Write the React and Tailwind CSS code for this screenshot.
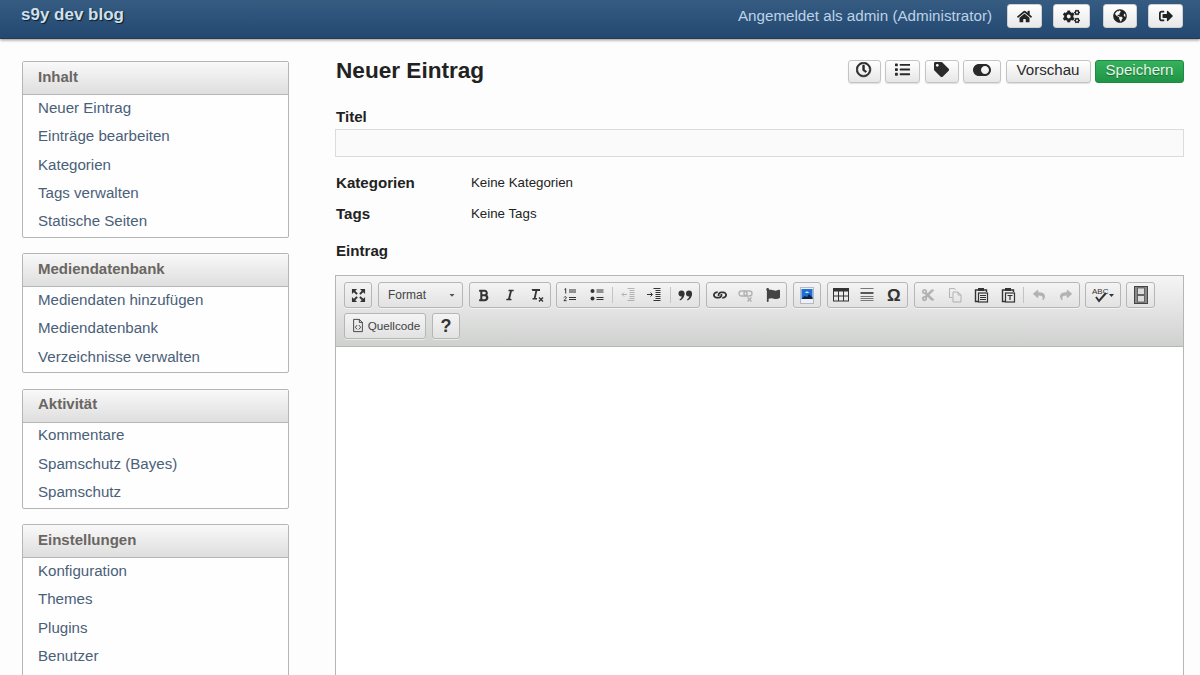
import React from "react";
import { FaHome, FaCogs, FaGlobeAmericas, FaSignOutAlt, FaRegClock, FaList, FaTag, FaToggleOn, FaBold, FaItalic, FaReply, FaShare, FaFlag, FaCut, FaLink, FaCaretDown } from "react-icons/fa";

const font = { fontFamily: '"Liberation Sans", Arial, sans-serif' };

const menus = [
  ["Inhalt", ["Neuer Eintrag", "Einträge bearbeiten", "Kategorien", "Tags verwalten", "Statische Seiten"]],
  ["Mediendatenbank", ["Mediendaten hinzufügen", "Mediendatenbank", "Verzeichnisse verwalten"]],
  ["Aktivität", ["Kommentare", "Spamschutz (Bayes)", "Spamschutz"]],
  ["Einstellungen", ["Konfiguration", "Themes", "Plugins", "Benutzer"]],
];

function HeadBtn({ w, children }) {
  return (
    <button className="h-[24px] flex items-center justify-center rounded-[3px] border border-[#d0d0d0] bg-gradient-to-b from-[#ffffff] to-[#e8e8e8] text-[#222] text-[14px]" style={{ width: w }}>
      {children}
    </button>
  );
}

function ActBtn({ w, children, green }) {
  return (
    <button
      className={green
        ? "h-[23px] pb-[2px] flex items-center justify-center rounded-[3px] border border-[#1f8a41] bg-gradient-to-b from-[#35b25c] to-[#1f9446] text-[#e6f5ea] text-[15.1px] [text-shadow:0_1px_1px_rgba(0,0,0,0.35)]"
        : "h-[23px] pb-[2px] flex items-center justify-center rounded-[3px] border border-[#c4c4c4] bg-gradient-to-b from-[#ffffff] to-[#e6e6e6] text-[#2a2a2a] text-[15.1px] shadow-[0_1px_1px_rgba(0,0,0,0.12)]"}
      style={{ width: w }}
    >
      {children}
    </button>
  );
}

function Group({ w, children }) {
  return (
    <div className="h-[26px] flex items-center justify-center rounded-[3px] border border-[#b6b6b6] bg-gradient-to-b from-[#f4f4f4] to-[#e2e2e2] shadow-[0_1px_0_rgba(255,255,255,0.5)]" style={{ width: w }}>
      {children}
    </div>
  );
}

function Tb({ children, off }) {
  return <span className={"w-[26.5px] h-[24px] flex items-center justify-center text-[#333] " + (off ? "opacity-30" : "")}>{children}</span>;
}

const Sep = () => <span className="w-px h-[16px] mx-[2px] bg-[#c4c4c4] shrink-0" />;

const S = ({ children, w = 16, h = 16 }) => (
  <svg width={w} height={h} viewBox="0 0 16 16" fill="none" stroke="#333" strokeWidth="1.2">{children}</svg>
);

const Maximize = () => (
  <S w={15} h={15}>
    <path d="M1 1h5.5L1 6.5zM15 1H9.5L15 6.5zM1 15h5.5L1 9.5zM15 15H9.5L15 9.5z" fill="#333" stroke="none" />
    <path d="M3.5 3.5l3 3M12.5 3.5l-3 3M3.5 12.5l3-3M12.5 12.5l-3-3" strokeWidth="2" />
  </S>
);
const RemoveFormat = () => (
  <S>
    <path d="M2.5 2h8.5v2H8.2L6.6 11h1.4v1.5H3.5V11h1.3L6.4 4H3.5z" fill="#333" stroke="none" />
    <path d="M10 10.5l4 4M14 10.5l-4 4" strokeWidth="1.4" />
  </S>
);
const Ol = () => (
  <S>
    <path d="M7 3h7M7 5h7M7 10.5h7M7 12.5h7" strokeWidth="1" />
    <path d="M2.5 2.5l1.2-1v5M2 10.5c.5-1.2 2.4-1 2.4.2 0 1-2.4 1.7-2.4 3h2.6" strokeWidth="1" />
  </S>
);
const Ul = () => (
  <S>
    <circle cx="3.5" cy="4" r="2" fill="#333" stroke="none" />
    <circle cx="3.5" cy="11.5" r="2" fill="#333" stroke="none" />
    <path d="M7.5 3h7M7.5 5h7M7.5 10.5h7M7.5 12.5h7" strokeWidth="1" />
  </S>
);
const Outdent = () => (
  <S>
    <path d="M7.5 1.5h7M9.5 3.5h5M9.5 5.5h5M9.5 7.5h5M9.5 9.5h5M9.5 11.5h5M7.5 13.5h7" strokeWidth="1" />
    <path d="M7 7.5H2M4 5.5l-2 2 2 2" strokeWidth="1" />
  </S>
);
const Indent = () => (
  <S>
    <path d="M7.5 1.5h7M9.5 3.5h5M9.5 5.5h5M9.5 7.5h5M9.5 9.5h5M9.5 11.5h5M7.5 13.5h7" strokeWidth="1" />
    <path d="M1 7.5h5M4.5 5.5l2 2-2 2" strokeWidth="1" />
  </S>
);
const Quote = () => (
  <svg width="15" height="11" viewBox="0 0 15 11" fill="#333">
    <circle cx="3.5" cy="3.5" r="3" />
    <path d="M6.5 3.5C6.5 7 4.5 9.5 2 10.5L1.5 9.5C3 8.5 4 7 4 5z" />
    <circle cx="11" cy="3.5" r="3" />
    <path d="M14 3.5C14 7 12 9.5 9.5 10.5L9 9.5C10.5 8.5 11.5 7 11.5 5z" />
  </svg>
);
const Unlink = () => (
  <S>
    <rect x="1" y="4" width="8" height="5" rx="2.5" strokeWidth="1.4" />
    <rect x="6" y="4" width="8" height="5" rx="2.5" strokeWidth="1.4" />
    <path d="M9.5 10.5l4 4M13.5 10.5l-4 4" strokeWidth="1.4" />
  </S>
);
const Img = () => (
  <svg width="14" height="17" viewBox="0 0 14 17">
    <rect x="0.5" y="0.5" width="13" height="16" fill="#eef0f3" stroke="#b4bac4" />
    <rect x="1.5" y="2" width="11" height="10" fill="#1d6fd6" />
    <path d="M1.5 12l3-3 2.5 1 2-3 3.5 3.5V12z" fill="#10233f" />
    <path d="M5 6c1-2 3-2 4 0z" fill="#cfe6ff" />
  </svg>
);
const Table = () => (
  <S>
    <rect x="0.5" y="2" width="15" height="12" strokeWidth="1" />
    <rect x="0" y="1" width="16" height="3.5" fill="#333" stroke="none" />
    <path d="M5.5 4v10M10.5 4v10M.5 9h15" strokeWidth="1" />
  </S>
);
const Hr = () => (
  <S>
    <path d="M1.5 1.5h13" strokeWidth="1" stroke="#777" />
    <path d="M1.5 6h13" strokeWidth="1.6" />
    <path d="M1.5 9.5h13M1.5 11.5h13M1.5 13.5h13" strokeWidth="1" stroke="#777" />
  </S>
);
const Copy = () => (
  <S>
    <path d="M2.5 1.5h5l1 1.5M2.5 1.5v9h3" strokeWidth="1" />
    <path d="M6 5h5l3 3v7H6zM11 5v3h3" strokeWidth="1" />
  </S>
);
const Paste = ({ t }) => (
  <S>
    <path d="M5 3H2.5v11.5H5" strokeWidth="1.4" />
    <path d="M11 3h2.5v2" strokeWidth="1.4" />
    <rect x="5" y="1" width="6" height="3" fill="#333" stroke="none" />
    <rect x="5.5" y="6" width="9" height="9" strokeWidth="1.2" />
    {t ? <path d="M7.5 8.5h5M10 8.5v4.5" strokeWidth="1.2" /> : <path d="M7 8.5h6M7 10.5h6M7 12.5h6" strokeWidth="1" />}
  </S>
);
const Spell = () => (
  <svg width="24" height="18" viewBox="0 0 24 18" fill="none">
    <text x="1" y="8" fontSize="8" fill="#333" style={font}>ABC</text>
    <path d="M5 11l3 4 7-8" stroke="#333" strokeWidth="2" />
    <path d="M18 8h5l-2.5 3z" fill="#333" />
  </svg>
);
const Film = () => (
  <svg width="14" height="18" viewBox="0 0 14 18">
    <rect x="0.5" y="0.5" width="13" height="17" fill="#8a8a8a" stroke="#444" />
    <rect x="3.5" y="2" width="7" height="6.5" fill="#dcdcdc" stroke="#444" strokeWidth="0.7" />
    <rect x="3.5" y="9.5" width="7" height="6.5" fill="#dcdcdc" stroke="#444" strokeWidth="0.7" />
  </svg>
);
const Source = () => (
  <S w={14} h={15}>
    <path d="M3 1h6.5L13 4.5V15H3zM9.5 1v3.5H13" strokeWidth="1" />
    <path d="M7 7.5L5 10l2 2.5M9 7.5l2 2.5-2 2.5" strokeWidth="1" />
  </S>
);

export default function App() {
  return (
    <div className="w-[1200px] h-[675px] overflow-hidden bg-[#fdfdfd] text-[#222]" style={font}>
      <header className="h-[39px] flex items-start justify-between pl-[21px] pr-[17px] bg-gradient-to-b from-[#365c82] to-[#234871] border-b border-[#2a3a4c] shadow-[0_1px_3px_rgba(0,0,0,0.45)]">
        <div className="text-[17px] leading-[30px] font-bold text-[#cfe0ef] [text-shadow:1px_1px_1px_rgba(0,0,0,0.7)]">s9y dev blog</div>
        <div className="flex items-center h-[32px]">
          <span className="text-[15.2px] mt-[1px] text-[#bcd2e6] mr-[15px]">Angemeldet als admin (Administrator)</span>
          <HeadBtn w="35px"><FaHome className="text-[15px]" /></HeadBtn>
          <span className="w-[11px]" />
          <HeadBtn w="37px"><FaCogs className="text-[17px]" /></HeadBtn>
          <span className="w-[13px]" />
          <HeadBtn w="34px"><FaGlobeAmericas /></HeadBtn>
          <span className="w-[11px]" />
          <HeadBtn w="35px"><FaSignOutAlt /></HeadBtn>
        </div>
      </header>

      <div className="flex pl-[22px] pt-[22px]">
        <aside className="w-[267px] flex flex-col gap-[15.2px] shrink-0">
          {menus.map(([title, items], i) => (
            <section key={title} className={"border border-[#b5b5b5] rounded-[2px] bg-[#fefefe] " + (i === 3 ? "pb-[30px]" : "")}>
              <h3 className="h-[33px] pl-[15px] pb-[2px] flex items-center text-[15px] font-bold text-[#6a6662] bg-gradient-to-b from-[#f9f9f9] to-[#dedede] border-b border-[#b5b5b5]">{title}</h3>
              <ul className="mt-[-1px] pb-[1px]">
                {items.map((t) => (
                  <li key={t} className="h-[28.4px] pl-[15px] flex items-center text-[15.1px] text-[#4a6078]">{t}</li>
                ))}
              </ul>
            </section>
          ))}
        </aside>

        <main className="w-[849px] ml-[46px] shrink-0">
          <div className="flex items-center justify-between h-[24px] mt-[-2px]">
            <h1 className="pl-[1px] text-[22.6px] font-bold text-[#222]">Neuer Eintrag</h1>
            <div className="flex items-center gap-[4.5px]">
              <ActBtn w="33px"><FaRegClock stroke="currentColor" strokeWidth={24} /></ActBtn>
              <ActBtn w="35px"><FaList /></ActBtn>
              <ActBtn w="34px"><FaTag /></ActBtn>
              <ActBtn w="38px"><FaToggleOn className="text-[18px]" /></ActBtn>
              <ActBtn w="85px">Vorschau</ActBtn>
              <ActBtn w="89px" green>Speichern</ActBtn>
            </div>
          </div>

          <label className="block pl-[1px] mt-[25px] text-[15.1px] leading-[18px] font-bold">Titel</label>
          <div className="mt-[3px] h-[28px] border border-[#dcdcdc] bg-[#fafafa]" />

          <div className="mt-[17px] pl-[1px] flex items-center h-[18px]">
            <span className="w-[135px] text-[15.1px] font-bold">Kategorien</span>
            <span className="text-[13.3px]">Keine Kategorien</span>
          </div>
          <div className="mt-[13px] pl-[1px] flex items-center h-[18px]">
            <span className="w-[135px] text-[15.1px] font-bold">Tags</span>
            <span className="text-[13.3px]">Keine Tags</span>
          </div>
          <div className="mt-[19px] pl-[1px] h-[18px] flex items-center text-[15.1px] font-bold">Eintrag</div>

          <div className="mt-[15px] h-[500px] border border-[#b6b6b6] bg-white">
            <div className="h-[71px] border-b border-[#b6b6b6] bg-gradient-to-b from-[#f5f5f5] to-[#cfd1cf] pt-[6px] pl-[8px] flex flex-col gap-[5px]">
              <div className="flex items-center">
                <Group w="28px"><Maximize /></Group>
                <span className="w-[6px]" />
                <Group w="85px">
                  <div className="w-full flex items-center justify-between pl-[9px] pr-[6px] text-[12px] text-[#444]">
                    <span>Format</span>
                    <FaCaretDown className="text-[8px] text-[#555]" />
                  </div>
                </Group>
                <span className="w-[6px]" />
                <Group w="82px">
                  <Tb><FaBold className="text-[13px]" /></Tb>
                  <Tb><FaItalic className="text-[12px]" /></Tb>
                  <Tb><RemoveFormat /></Tb>
                </Group>
                <span className="w-[5px]" />
                <Group w="144px">
                  <Tb><Ol /></Tb>
                  <Tb><Ul /></Tb>
                  <Sep />
                  <Tb off><Outdent /></Tb>
                  <Tb><Indent /></Tb>
                  <Sep />
                  <Tb><Quote /></Tb>
                </Group>
                <span className="w-[6px]" />
                <Group w="81px">
                  <Tb><FaLink className="text-[12px] rotate-45" /></Tb>
                  <Tb off><Unlink /></Tb>
                  <Tb><FaFlag className="text-[14px] text-[#444]" /></Tb>
                </Group>
                <span className="w-[6px]" />
                <Group w="28px"><Img /></Group>
                <span className="w-[6px]" />
                <Group w="81px">
                  <Tb><Table /></Tb>
                  <Tb><Hr /></Tb>
                  <Tb><span className="text-[17px] font-bold leading-none">Ω</span></Tb>
                </Group>
                <span className="w-[6px]" />
                <Group w="166px">
                  <Tb off><FaCut className="text-[14px]" /></Tb>
                  <Tb off><Copy /></Tb>
                  <Tb><Paste /></Tb>
                  <Tb><Paste t /></Tb>
                  <Sep />
                  <Tb off><FaReply className="text-[12px]" /></Tb>
                  <Tb off><FaShare className="text-[12px]" /></Tb>
                </Group>
                <span className="w-[5px]" />
                <Group w="36px"><Spell /></Group>
                <span className="w-[5px]" />
                <Group w="29px"><Film /></Group>
              </div>
              <div className="flex items-center">
                <Group w="82px">
                  <div className="flex items-center gap-[3px] pl-[1px] text-[11.7px] text-[#444]">
                    <Source />
                    <span>Quellcode</span>
                  </div>
                </Group>
                <span className="w-[6px]" />
                <Group w="28px"><span className="text-[18px] font-bold text-[#333]">?</span></Group>
              </div>
            </div>
          </div>
        </main>
      </div>
    </div>
  );
}
